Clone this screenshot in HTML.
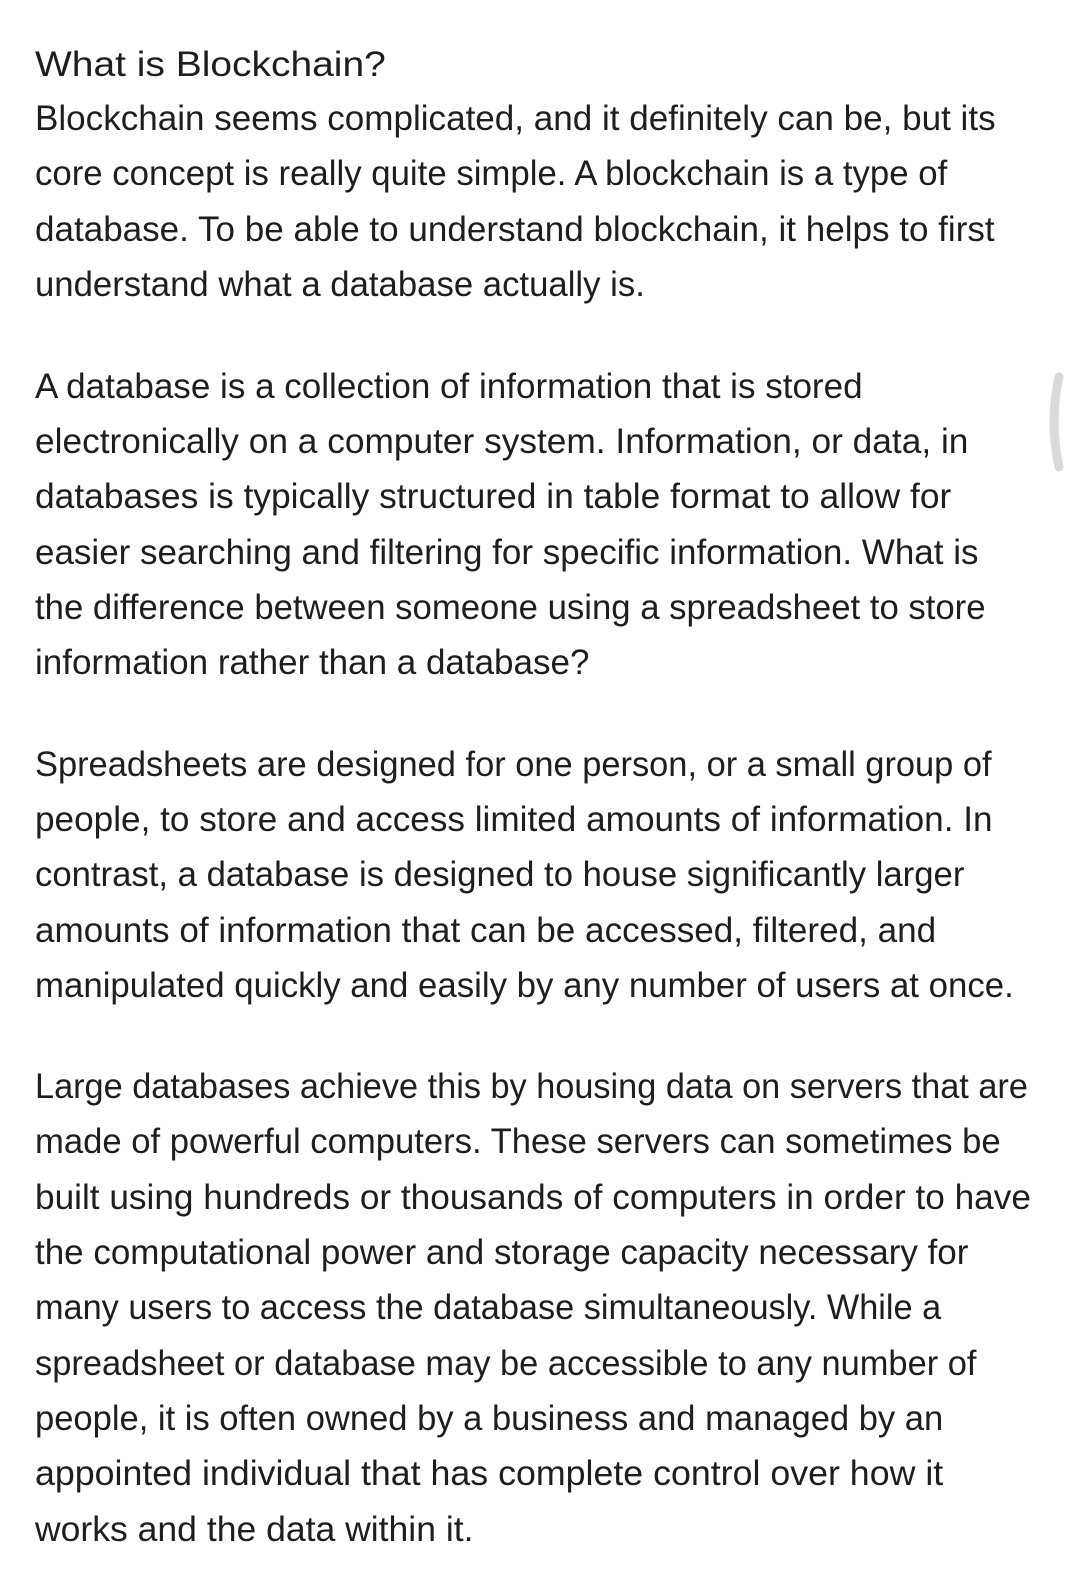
<!DOCTYPE html>
<html><head><meta charset="utf-8"><style>
html,body{margin:0;padding:0;background:#fff;}
body{width:1080px;height:1579px;position:relative;overflow:hidden;font-family:"Liberation Sans",sans-serif;color:#1e1e1e;}
.l{position:absolute;left:35px;font-size:35px;line-height:40px;white-space:nowrap;transform-origin:0 50%;display:inline-block;}
.h{position:absolute;left:1046px;top:372px;width:18px;height:100px;}
</style></head><body>
<div id="c"></div>
<svg class="h" viewBox="0 0 18 100"><path d="M13 5 Q3 50 13 95" stroke="#dadada" stroke-width="9" fill="none" stroke-linecap="round"/></svg>
<script>
var L=[
[63,"What is Blockchain?",383],
[117,"Blockchain seems complicated, and it definitely can be, but its",988],
[172,"core concept is really quite simple. A blockchain is a type of",940],
[228,"database. To be able to understand blockchain, it helps to first",987],
[283,"understand what a database actually is.",640],
[385,"A database is a collection of information that is stored",856],
[440,"electronically on a computer system. Information, or data, in",961],
[495,"databases is typically structured in table format to allow for",944],
[551,"easier searching and filtering for specific information. What is",971],
[606,"the difference between someone using a spreadsheet to store",978],
[661,"information rather than a database?",585],
[763,"Spreadsheets are designed for one person, or a small group of",984],
[818,"people, to store and access limited amounts of information. In",985],
[873,"contrast, a database is designed to house significantly larger",957],
[929,"amounts of information that can be accessed, filtered, and",929],
[984,"manipulated quickly and easily by any number of users at once.",1006],
[1085,"Large databases achieve this by housing data on servers that are",1020],
[1140,"made of powerful computers. These servers can sometimes be",993],
[1196,"built using hundreds or thousands of computers in order to have",1023],
[1251,"the computational power and storage capacity necessary for",961],
[1306,"many users to access the database simultaneously. While a",934],
[1362,"spreadsheet or database may be accessible to any number of",969],
[1417,"people, it is often owned by a business and managed by an",936],
[1472,"appointed individual that has complete control over how it",936],
[1528,"works and the data within it.",470]];
var c=document.getElementById('c');
L.forEach(function(a){var s=document.createElement('span');s.className='l';s.textContent=a[1];s.style.top=(a[0]-18)+'px';c.appendChild(s);var w=s.getBoundingClientRect().width;s.style.transform='scaleX('+((a[2]-35)/w*1.008)+')';});
</script>
</body></html>
